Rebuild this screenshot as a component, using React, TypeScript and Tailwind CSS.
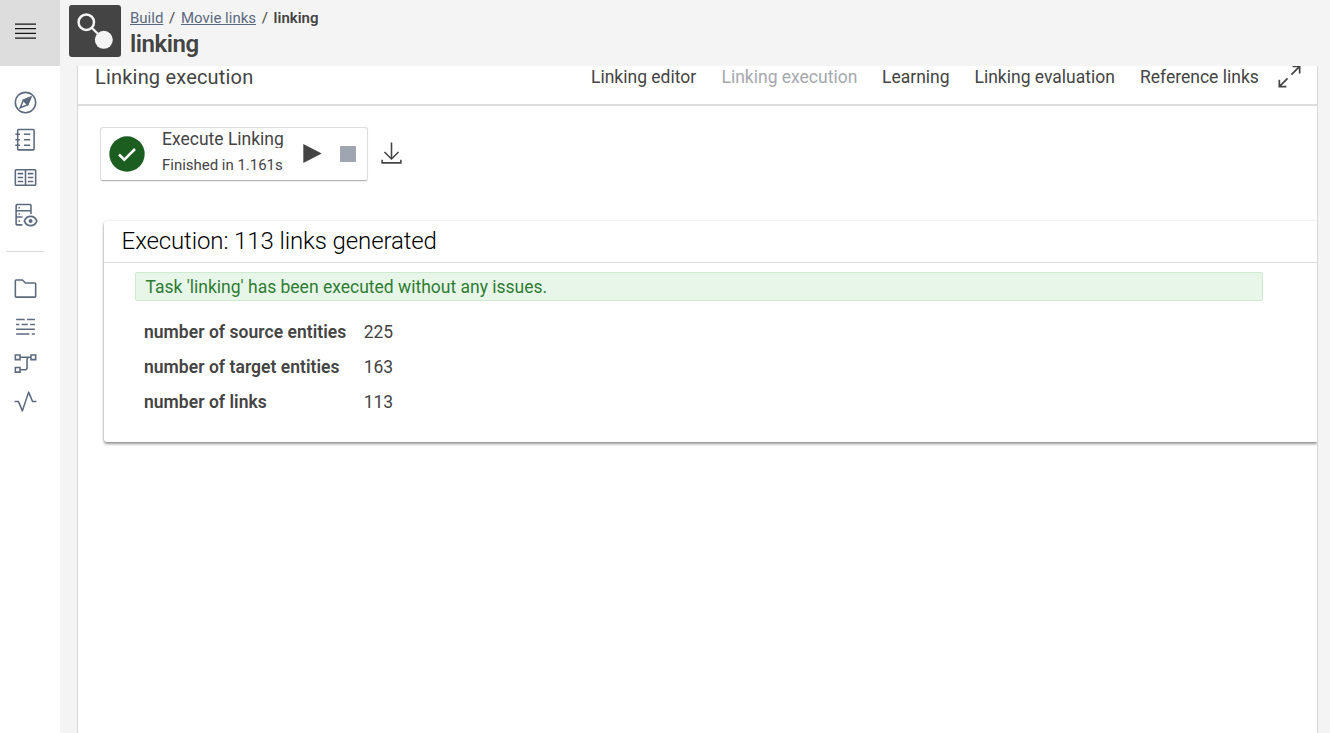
import type { ReactNode } from "react";

type IconProps = { children: ReactNode; className?: string };

/* 32-unit grid line icons */
function Icon({ children, className = "h-[25px] w-[25px] text-[#5c6a80]" }: IconProps) {
  return (
    <svg viewBox="0 0 32 32" fill="none" stroke="currentColor" strokeWidth="2" className={`block shrink-0 ${className}`}>
      {children}
    </svg>
  );
}

const discover = [
  <Icon key="compass">
    <circle cx="16" cy="16" r="13" />
    <path d="M22.7 9.3 18.8 18.8 9.3 22.7 13.2 13.2Z" />
    <path d="M22.7 9.3 13.2 13.2 16 16Z" fill="currentColor" />
    <path d="M22.7 9.3 18.8 18.8 16 16Z" fill="currentColor" />
  </Icon>,
  <Icon key="notebook">
    <path d="M6 6V3a1 1 0 0 1 1-1h19a1 1 0 0 1 1 1v24a1 1 0 0 1-1 1H7a1 1 0 0 1-1-1V6M3 8h6M3 15h6M3 22h6M14 8h8M14 15h8M14 22h8" />
  </Icon>,
  <Icon key="catalog">
    <path d="M4 6h24a1 1 0 0 1 1 1v18a1 1 0 0 1-1 1H4a1 1 0 0 1-1-1V7a1 1 0 0 1 1-1ZM16 6v20M6 11h7M6 16h7M6 21h7M19 11h7M19 16h7M19 21h7" />
  </Icon>,
  <Icon key="data">
    <path d="M12 28H5a1 1 0 0 1-1-1V3a1 1 0 0 1 1-1h17a1 1 0 0 1 1 1v11M4 10h19M4 18h8" />
    <path d="M7 6h2M7 14h2M7 23h2" />
    <path d="M14.5 23c3-8 13-8 16 0c-3 8-13 8-16 0Z" strokeWidth="2.2" />
    <circle cx="22.5" cy="23" r="2.5" fill="currentColor" stroke="none" />
  </Icon>,
];

const build = [
  <Icon key="folder">
    <path d="M4 5h8l4 4h12a1 1 0 0 1 1 1v16a1 1 0 0 1-1 1H4a1 1 0 0 1-1-1V6a1 1 0 0 1 1-1Z" />
  </Icon>,
  <Icon key="rules">
    <path d="M4 7h11M18 7h10M4 13.5h4M11 13.5h8M22 13.5h6M4 19.5h24M4 25.5h17M24 25.5h4" />
  </Icon>,
  <Icon key="workflow">
    <path d="M3 5h6v6H3ZM23 5h6v6h-6ZM3 21h6v6H3ZM9 8h14M9 24h6a3 3 0 0 0 3-3V11a3 3 0 0 1 3-3" />
  </Icon>,
  <Icon key="activity">
    <path d="M2 16h5l5 12L20 4l5 12h5" strokeLinejoin="round" />
  </Icon>,
];

const tabs = [
  { label: "Linking editor", width: "w-[105.5px]" },
  { label: "Linking execution", width: "w-[135.5px]", active: true },
  { label: "Learning", width: "w-[67.5px]" },
  { label: "Linking evaluation", width: "w-[140.5px]" },
  { label: "Reference links", width: "w-[119px]" },
];

const stats = [
  ["number of source entities", "225"],
  ["number of target entities", "163"],
  ["number of links", "113"],
];

function Sidebar() {
  return (
    <aside className="flex w-[60px] shrink-0 flex-col bg-white">
      <button className="flex h-[66px] shrink-0 items-center bg-[#dddddd] pr-[9px] pb-1 pl-[15px]">
        <svg viewBox="0 0 21 16" className="block h-4 w-[21px]" stroke="#161616" strokeWidth="1.25">
          <path d="M0 1h21M0 5.7h21M0 10.3h21M0 15h21" />
        </svg>
      </button>
      <nav className="flex flex-col gap-[12.5px] pt-6 pl-[13px]">{discover}</nav>
      <div className="mt-[23.5px] ml-1.5 h-px w-[38px] bg-[#d8dadd]" />
      <nav className="flex flex-col gap-[12.5px] pt-6 pl-[13px]">{build}</nav>
    </aside>
  );
}

function Header() {
  return (
    <header className="flex h-[66px] shrink-0 gap-[9px] pt-[5px] pl-[9px]">
      <div className="h-[52px] w-[52px] rounded-[3px] bg-[#444444]">
        <svg viewBox="0 0 52 52" className="block h-full w-full">
          <path d="m23 23 6 6" stroke="#f4f4f4" strokeWidth="2.3" />
          <circle cx="17.3" cy="17.2" r="7.7" fill="none" stroke="#f4f4f4" strokeWidth="2.5" />
          <circle cx="34.8" cy="34.8" r="9" fill="#f4f4f4" />
        </svg>
      </div>
      <div>
        <div className="flex h-[25px] items-center gap-[5.7px] pt-px text-[15px] whitespace-nowrap">
          <a className="text-[#5c6a80] underline">Build</a>
          <span>/</span>
          <a className="text-[#5c6a80] underline">Movie links</a>
          <span>/</span>
          <b className="font-semibold">linking</b>
        </div>
        <h1 className="text-[24px] leading-[28px] font-semibold tracking-[-0.45px]">linking</h1>
      </div>
    </header>
  );
}

function TaskBar() {
  return (
    <div className="flex items-center">
      <div className="flex h-[54px] w-[268px] items-center rounded-[3px] border border-[#dddddd] border-b-[#b5b5b5] pl-2 shadow-[0_1px_1px_rgba(0,0,0,0.08)]">
        <svg viewBox="0 0 36 36" className="block h-9 w-9">
          <circle cx="18" cy="18" r="17.7" fill="#1b5e20" />
          <path d="m10 18.5 5.3 5.2L26 13" fill="none" stroke="white" strokeWidth="2.5" />
        </svg>
        <div className="ml-[17px] w-[141px] pb-[5px] whitespace-nowrap">
          <div className="mb-1 h-[22px] overflow-hidden text-[17.5px] leading-[26px]">Execute Linking</div>
          <div className="text-[15px] leading-[26px] tracking-[-0.02px]">Finished in 1.161s</div>
        </div>
        <svg viewBox="0 0 20 20" className="-mt-px block h-5 w-5 shrink-0" fill="#444444">
          <path d="M.3 0 18.7 9.5 .3 19Z" />
        </svg>
        <div className="-mt-px ml-[17px] h-4 w-4 shrink-0 rounded-[1px] bg-[#a0a6b1]" />
      </div>
      <Icon className="-mt-px ml-[11px] h-[25px] w-[25px] text-[#444444]">
        <path d="M16 2v21M7 14l9 9 9-9M4 24v4h24v-4" />
      </Icon>
    </div>
  );
}

function Report() {
  return (
    <section className="mt-[40px] ml-[4px] h-[221px] rounded-l-[3px] shadow-[0_0_3px_rgba(0,0,0,0.12),0_2px_3px_rgba(0,0,0,0.4)]">
      <h2 className="flex h-[42px] items-center border-b border-[#dddddd] pl-[17.6px] text-[24px] leading-[25px] font-light tracking-[-0.11px] text-black">
        Execution: 113 links generated
      </h2>
      <div className="mt-[9px] ml-[31px] flex h-[29px] w-[1128px] items-center rounded-[2px] border border-[#d0ead2] bg-[#e8f5e9] pt-px pl-[9.5px] text-[17.5px] text-[#2e7d32]">
        Task 'linking' has been executed without any issues.
      </div>
      <dl className="mt-[14px] ml-10 text-[17.5px] leading-[35px]">
        {stats.map(([label, value]) => (
          <div key={label} className="flex">
            <dt className="w-[219.7px] font-semibold tracking-[0.04px]">{label}</dt>
            <dd>{value}</dd>
          </div>
        ))}
      </dl>
    </section>
  );
}

export default function App() {
  return (
    <div className="flex h-[733px] w-[1330px] overflow-hidden bg-[#f4f4f4] font-[Roboto,sans-serif] text-[#444444]">
      <Sidebar />
      <div className="flex min-w-0 flex-1 flex-col">
        <Header />
        <main className="mr-3 ml-[17px] flex-1 overflow-hidden border-x border-[#d8d8d8] bg-white">
          <div className="flex h-10 justify-between border-b-2 border-[#dddddd] pr-[15px] pl-[17px] whitespace-nowrap">
            <h2 className="text-[20px] leading-[22px] tracking-[0.19px]">Linking execution</h2>
            <div className="flex">
              <div className="flex gap-[25px] text-[17.5px] leading-[22px]">
                {tabs.map((t) => (
                  <a key={t.label} className={`${t.width} ${t.active ? "text-[#a5a8b0]" : ""}`}>
                    {t.label}
                  </a>
                ))}
              </div>
              <Icon className="-mt-[2px] ml-[18px] h-[25px] w-[25px] text-[#444444]">
                <path d="M20 3h9v9M29 3 18.5 13.5M12 29H3v-9M3 29l10.5-10.5" strokeWidth="2.2" />
              </Icon>
            </div>
          </div>
          <div className="pt-[21px] pl-[22px]">
            <TaskBar />
            <Report />
          </div>
        </main>
      </div>
    </div>
  );
}
